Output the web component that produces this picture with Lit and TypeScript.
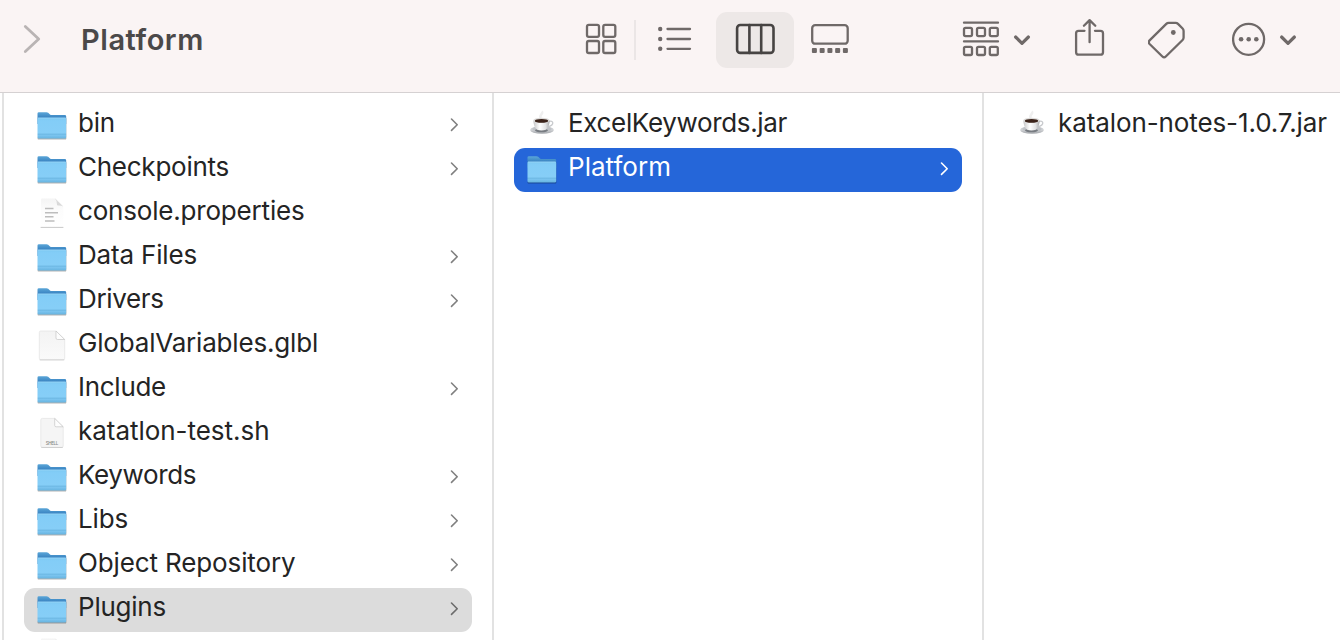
import { LitElement, html, svg, css, nothing } from "lit";
import { customElement, property } from "lit/decorators.js";

type Kind = "folder" | "text" | "blank" | "shell" | "jar";
interface Entry {
  name: string;
  kind: Kind;
  width: number;
  state?: "open" | "active";
}

const columns: Entry[][] = [
  [
    { name: "bin", kind: "folder", width: 37 },
    { name: "Checkpoints", kind: "folder", width: 151 },
    { name: "console.properties", kind: "text", width: 226.5 },
    { name: "Data Files", kind: "folder", width: 119 },
    { name: "Drivers", kind: "folder", width: 85.5 },
    { name: "GlobalVariables.glbl", kind: "blank", width: 240 },
    { name: "Include", kind: "folder", width: 88 },
    { name: "katatlon-test.sh", kind: "shell", width: 191.5 },
    { name: "Keywords", kind: "folder", width: 118 },
    { name: "Libs", kind: "folder", width: 50 },
    { name: "Object Repository", kind: "folder", width: 217.5 },
    { name: "Plugins", kind: "folder", width: 88, state: "open" },
    { name: "", kind: "text", width: 0 },
  ],
  [
    { name: "ExcelKeywords.jar", kind: "jar", width: 219 },
    { name: "Platform", kind: "folder", width: 103, state: "active" },
  ],
  [{ name: "katalon-notes-1.0.7.jar", kind: "jar", width: 269 }],
];

const art = {
  folder: svg`
    <defs>
      <linearGradient id="back" x2="0" y2="1"><stop offset="0" stop-color="#5ba6d8"/><stop offset=".45" stop-color="#3a84c2"/></linearGradient>
      <linearGradient id="front" x2="0" y2="1"><stop offset="0" stop-color="#7cc8f3"/><stop offset=".15" stop-color="#83cdf7"/><stop offset=".74" stop-color="#86cef7"/><stop offset=".78" stop-color="#6bb6e2"/><stop offset=".84" stop-color="#7bc4ef"/><stop offset="1" stop-color="#66b3df"/></linearGradient>
    </defs>
    <path d="M1.600 33.500V34.400q0 1.200 1.200 1.200H29q1.300 0 1.300-1.200V14z" fill="#000" opacity=".3"/>
    <path d="M1.500 9.600q0-1.400 1.400-1.400h7.600q1 0 1.700.6l1.800 1.600q.7.600 1.700.600h13q1.500 0 1.500 1.400V20H1.500z" fill="url(#back)"/>
    <path d="M1.500 14.800q0-1 1-1H29.200q1 0 1 1V33.200q0 1.400-1.400 1.400H2.900q-1.400 0-1.400-1.400z" fill="url(#front)"/>
    <path d="M2 14H29.700" stroke="#a2d9f6" stroke-width=".7"/>`,
  text: svg`
    <defs><linearGradient id="sheet" x2="0" y2="1"><stop offset="0" stop-color="#f4f4f4"/><stop offset=".4" stop-color="#fcfcfc"/><stop offset="1" stop-color="#fff"/></linearGradient></defs>
    <path d="M5 35.400V7.500q0-1 1-1h13.500l7.800 7.800v21z" fill="url(#sheet)"/>
    <path d="M4.600 35.400H27.400" stroke="#c9c9c9" stroke-width="1"/>
    <path d="M18.800 6.200l8.400 8.400q-1.800-1.400-5-1.200-1.400 0-1.300-1.500 0-3.400-2.100-5.700z" fill="#d9d9d9"/>
    <path d="M9 16.500h8.500M9 20.700h13M9 24.700h8.500M9 29h9.500" stroke="#bdbdbd" stroke-width="1.400"/>`,
  blank: svg`
    <defs><linearGradient id="paper" x2="0" y2="1"><stop offset="0" stop-color="#f3f3f3"/><stop offset="1" stop-color="#fafafa"/></linearGradient></defs>
    <path d="M3.300 8.500q0-1.500 1.500-1.500H20l8.700 8.500v18.700q0 1.600-1.500 1.600H4.800q-1.500 0-1.500-1.600z" fill="url(#paper)" stroke="#e2e2e2" stroke-width=".7"/>
    <path d="M3.700 35.900H28.300" stroke="#c4c4c4" stroke-width=".7"/>
    <path d="M20 7v7q0 1.500 1.500 1.500h7.200z" fill="#fdfdfd" stroke="#c4c4c4" stroke-width=".7"/>`,
  shell: svg`
    <path d="M4.800 7.900q0-1.500 1.500-1.500H18.700l8.500 8.400v19.100q0 1.500-1.500 1.500H6.300q-1.500 0-1.500-1.500z" fill="#f5f5f5" stroke="#e2e2e2" stroke-width=".7"/>
    <path d="M5.300 35.500H26.800" stroke="#c4c4c4" stroke-width=".7"/>
    <path d="M18.700 6.400v7q0 1.400 1.400 1.400h7.100z" fill="#fdfdfd" stroke="#c4c4c4" stroke-width=".7"/>
    <text x="16" y="32.800" text-anchor="middle" font-size="4.500" font-weight="500" fill="#888" textLength="12.500">SHELL</text>`,
  jar: svg`
    <defs>
      <linearGradient id="cup"><stop offset="0" stop-color="#c5c5c6"/><stop offset=".4" stop-color="#fff"/><stop offset=".75" stop-color="#e2e2e3"/><stop offset="1" stop-color="#aaaaac"/></linearGradient>
      <linearGradient id="dish" x2="0" y2="1"><stop offset="0" stop-color="#b8bbc0"/><stop offset=".5" stop-color="#d2d4d7"/><stop offset="1" stop-color="#a0a3a8"/></linearGradient>
    </defs>
    <path d="M15 14q-1.500-1.500.2-3.500t.5-3" fill="none" stroke="#efefef" stroke-width="2.500"/>
    <ellipse cx="16" cy="25.900" rx="11.900" ry="3.900" fill="url(#dish)"/>
    <ellipse cx="16" cy="25.300" rx="9.500" ry="2.500" fill="#bfc2c6"/>
    <ellipse cx="15.500" cy="26.300" rx="6.500" ry="2" fill="#777b81"/>
    <path d="M22.500 17.500q4-1 4.300 1.300.2 2.900-5.300 4" fill="none" stroke="#c9cbce" stroke-width="1.300"/>
    <path d="M7.300 16.500q.2 6.300 3.700 9.300 4.500 1.600 9 0 3.500-3 3.700-9.300z" fill="url(#cup)"/>
    <ellipse cx="15.500" cy="16.400" rx="8.200" ry="2.700" fill="#dddcdb"/>
    <ellipse cx="15.500" cy="16.900" rx="6.700" ry="1.900" fill="#3b2219"/>`,
};

@customElement("file-row")
class FileRow extends LitElement {
  @property({ attribute: false }) entry!: Entry;
  @property({ reflect: true }) state = "";

  static styles = css`
    :host { display: flex; height: 44px; flex: none; padding-left: 12px; border-radius: 11px; color: #242424; --chev: #808080; }
    :host([state="open"]) { background: #dcdcdc; --chev: #6c6c6c; }
    :host([state="active"]) { background: #2566d9; color: #fff; --chev: #fff; }
    svg { flex: none; display: block; }
    .name { flex: 1; padding-left: 10px; line-height: 38px; font-size: 26px; white-space: nowrap; }
    .chev { margin-right: 12px; fill: none; stroke: var(--chev); stroke-width: 1.6; stroke-linecap: round; stroke-linejoin: round; }
  `;

  firstUpdated() {
    const span = this.renderRoot.querySelector<HTMLElement>(".name span")!;
    const n = this.entry.name.length;
    if (n) span.style.letterSpacing = `${(this.entry.width - span.getBoundingClientRect().width) / n}px`;
  }

  render() {
    const { name, kind } = this.entry;
    return html`
      <svg width="32" height="44" viewBox="0 0 32 44">${art[kind]}</svg>
      <div class="name"><span>${name}</span></div>
      ${kind === "folder"
        ? html`<svg class="chev" width="10" height="44" viewBox="0 0 10 44"><path d="M1.500 15l5.700 5.700-5.700 5.700" /></svg>`
        : nothing}
    `;
  }
}

@customElement("app-root")
class AppRoot extends LitElement {
  static styles = css`
    :host { display: flex; flex-direction: column; width: 1340px; height: 640px; overflow: hidden; background: #fff; font-family: Inter, "Liberation Sans", sans-serif; }
    .bar { display: flex; flex: none; height: 92px; background: #faf4f4; border-bottom: 1px solid #d5d1d2; }
    .bar svg { display: block; flex: none; fill: none; stroke: #6f6968; stroke-width: 2.3; stroke-linecap: round; stroke-linejoin: round; }
    .bar .forward { stroke: #b9b4b4; stroke-width: 2.8; }
    .bar .solid { fill: #6f6968; stroke: none; }
    .title { width: 504px; padding-left: 25px; box-sizing: border-box; line-height: 79px; font-size: 29px; font-weight: 600; letter-spacing: 0.55px; color: #4b4949; }
    .sep { width: 2px; height: 40px; margin: 20px 20px 0 14px; background: #ebe6e6; }
    .selected { width: 78px; height: 56px; margin: 12px 0 0 22px; border-radius: 11px; background: #ede8e7; }
    .bar .selected svg { stroke: #474443; stroke-width: 2.6; }
    .grid { margin-left: 24px; }
    .gallery { margin-left: 14px; }
    .group { margin-left: 110px; }
    .arrow { margin-left: 10px; }
    .bar .arrow { stroke-width: 3.2; }
    .share { margin-left: 42px; }
    .tag { margin-left: 40px; }
    .more { margin-left: 44px; }
    .columns { display: flex; flex: 1; min-height: 0; padding-left: 2px; }
    .column { display: flex; flex-direction: column; width: 490px; flex: none; box-sizing: border-box; padding: 11px 20px 0; border-left: 2px solid #e2e2e2; }
  `;

  render() {
    return html`
      <header class="bar">
        <svg class="forward" width="56" height="92" viewBox="0 0 56 92"><path d="M25.300 26.400L38.700 39 25.300 51.600" /></svg>
        <div class="title">Platform</div>
        <svg class="grid" width="36" height="92" viewBox="584 0 36 92">
          <rect x="587" y="24.800" width="12" height="12" rx="1.800" /><rect x="603.300" y="24.800" width="12" height="12" rx="1.800" />
          <rect x="587" y="41" width="12" height="12" rx="1.800" /><rect x="603.300" y="41" width="12" height="12" rx="1.800" />
        </svg>
        <div class="sep"></div>
        <svg width="38" height="92" viewBox="656 0 38 92">
          <path d="M667.500 29h22.500M667.500 39h22.500M667.500 48.800h22.500" />
          <g class="solid"><circle cx="660.200" cy="29" r="2.200" /><circle cx="660.200" cy="39" r="2.200" /><circle cx="660.200" cy="48.800" r="2.200" /></g>
        </svg>
        <div class="selected">
          <svg width="78" height="56" viewBox="716 12 78 56"><rect x="737.100" y="25" width="36.400" height="27.900" rx="3.200" /><path d="M749.400 25v28M761.200 25v28" /></svg>
        </div>
        <svg class="gallery" width="44" height="92" viewBox="808 0 44 92">
          <rect x="812.200" y="25.200" width="35.500" height="18.500" rx="3" />
          <g class="solid">${[0, 1, 2, 3, 4].map((i) => svg`<rect x=${811.9 + i * 7.75} y="48" width="5" height="5" rx="1" />`)}</g>
        </svg>
        <svg class="group" width="40" height="92" viewBox="962 0 40 92">
          <path d="M964 22.700h34M964 41.400h34" />
          ${[27.9, 46.8].map((y) => [964, 977, 989.8].map((x) => svg`<rect x=${x} y=${y} width="8" height="8.200" rx="1.500" />`))}
        </svg>
        <svg class="arrow" width="20" height="92" viewBox="1012 0 20 92"><path d="M1015.600 37l6.400 6.300 6.400-6.300" /></svg>
        <svg class="share" width="34" height="92" viewBox="1074 0 34 92">
          <path d="M1084.500 30.800H1078.600q-2.500 0-2.500 2.500V52.200q0 2.500 2.500 2.500h21.900q2.500 0 2.500-2.500V33.300q0-2.500-2.500-2.500H1095M1089.600 42.200V20.600M1083.900 25.800l5.700-5.700 5.700 5.700" />
        </svg>
        <svg class="tag" width="40" height="92" viewBox="1148 0 40 92">
          <path d="M1149.600 40.400L1166.300 23.900Q1167.300 22.900 1168.700 22.900H1175.600Q1177 22.900 1178 23.900L1182.600 28.500Q1183.600 29.500 1183.600 30.900V37.500Q1183.600 39 1182.600 40L1165.800 56.500Q1164.100 58.200 1162.400 56.500L1149.600 44Q1147.900 42.200 1149.600 40.400Z" />
          <circle class="solid" cx="1173.300" cy="32.500" r="2.400" />
        </svg>
        <svg class="more" width="36" height="92" viewBox="1232 0 36 92">
          <circle cx="1248.600" cy="39.300" r="15.500" />
          <g class="solid"><circle cx="1241.100" cy="39.300" r="2.300" /><circle cx="1248.700" cy="39.300" r="2.300" /><circle cx="1256.300" cy="39.300" r="2.300" /></g>
        </svg>
        <svg class="arrow" width="20" height="92" viewBox="1278 0 20 92"><path d="M1281.600 37l6.400 6.300 6.400-6.300" /></svg>
      </header>
      <main class="columns">
        ${columns.map((rows) => html`<section class="column">${rows.map((e) => html`<file-row .entry=${e} state=${e.state ?? ""}></file-row>`)}</section>`)}
      </main>
    `;
  }
}
